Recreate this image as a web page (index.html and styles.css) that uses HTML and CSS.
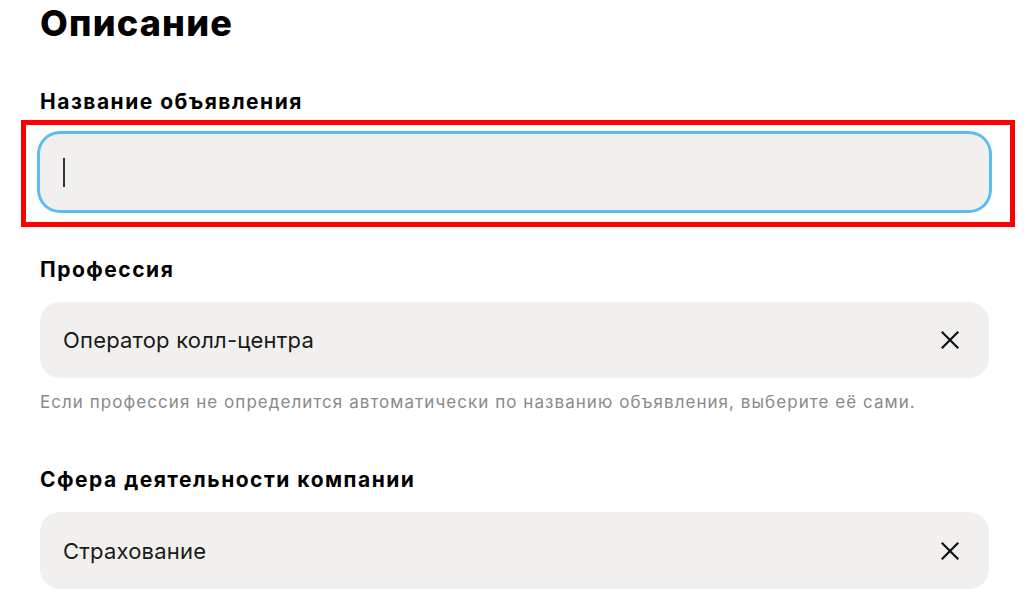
FILE: index.html
```html
<!DOCTYPE html>
<html lang="ru">
<head>
<meta charset="utf-8">
<title>Описание</title>
<link rel="stylesheet" href="styles.css">
</head>
<body>
<main class="form">
  <h1 class="title">Описание</h1>

  <section class="field field-first">
    <label class="label">Название объявления</label>
    <div class="input-wrap">
      <div class="input input-focused"><span class="caret"></span></div>
      <div class="annotation"></div>
    </div>
  </section>

  <section class="field">
    <label class="label">Профессия</label>
    <div class="input">
      <span class="value">Оператор колл-центра</span>
      <svg class="clear" width="18" height="18" viewBox="0 0 18 18"><path d="M1.5 1.5 L16.5 16.5 M16.5 1.5 L1.5 16.5" stroke="#111" stroke-width="2.2" fill="none" stroke-linecap="square"/></svg>
    </div>
    <p class="hint">Если профессия не определится автоматически по названию объявления, выберите её сами.</p>
  </section>

  <section class="field field-last">
    <label class="label">Сфера деятельности компании</label>
    <div class="input input-tall">
      <span class="value">Страхование</span>
      <svg class="clear" width="18" height="18" viewBox="0 0 18 18"><path d="M1.5 1.5 L16.5 16.5 M16.5 1.5 L1.5 16.5" stroke="#111" stroke-width="2.2" fill="none" stroke-linecap="square"/></svg>
    </div>
  </section>
</main>
</body>
</html>
```

FILE: styles.css
```css
* { box-sizing: border-box; }
html, body {
  margin: 0;
  padding: 0;
  background: #ffffff;
  width: 1024px;
  height: 610px;
  overflow: hidden;
}
body {
  font-family: Inter, "Noto Sans", sans-serif;
  color: #000;
}
.form {
  width: 989px;
  padding: 1px 0 0 40px;
}
.title {
  margin: 0;
  font-size: 36px;
  line-height: 44px;
  font-weight: 800;
  letter-spacing: 1.2px;
}
.field {
  display: flex;
  flex-direction: column;
}
.field-first { margin-top: 45px; }
.field + .field { margin-top: 48px; }
.field-last { margin-top: 54px !important; }
.label {
  display: block;
  font-size: 21px;
  line-height: 24px;
  font-weight: 700;
  letter-spacing: 1.5px;
  margin-bottom: 20px;
}
.input-wrap { position: relative; }
.input {
  height: 76px;
  background: #f1f0ee;
  border-radius: 20px;
  display: flex;
  align-items: center;
  justify-content: space-between;
  padding: 0 30px 0 23px;
}
.input-tall { height: 77px; }
.input-focused {
  box-shadow: 0 0 0 3px #5bbdf3;
}
.caret {
  width: 2px;
  height: 29px;
  background: #333;
  margin-top: 1px;
}
.value {
  font-size: 22px;
  line-height: 26px;
  color: #1a1a1a;
  letter-spacing: 0.2px;
}
.clear { display: block; }
.hint {
  margin: 12px 0 0;
  font-size: 17px;
  line-height: 24px;
  color: #8a8a8a;
  letter-spacing: 1.05px;
}
.annotation {
  position: absolute;
  left: -19px;
  top: -14px;
  right: -26px;
  bottom: -17px;
  border: 5px solid #ff0000;
  pointer-events: none;
}
```
